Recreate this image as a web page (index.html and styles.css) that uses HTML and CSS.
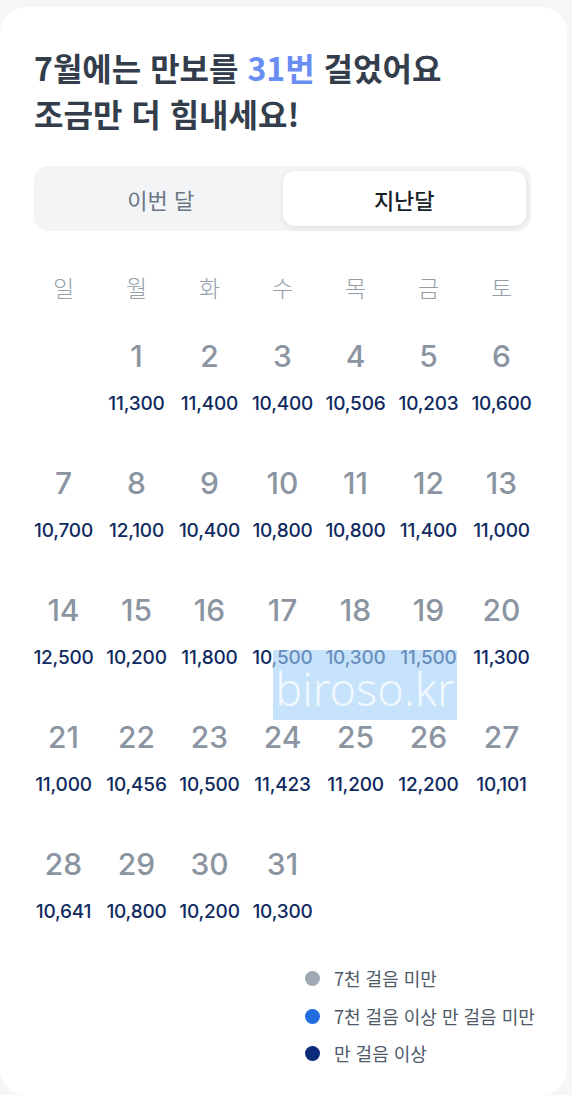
FILE: index.html
```html
<!DOCTYPE html>
<html lang="ko">
<head>
    <meta charset="UTF-8">
    <meta name="viewport" content="width=device-width, initial-scale=1.0">
    <title>만보 달력</title>
    <link rel="stylesheet" href="styles.css">
</head>
<body>

    <div class="card">
        <h1 class="title">7월에는 만보를 <span class="accent">31번</span> 걸었어요<br>조금만 더 힘내세요!</h1>

        <div class="tabs">
            <button class="tab">이번 달</button>
            <button class="tab active">지난달</button>
        </div>

        <div class="week">
            <span>일</span><span>월</span><span>화</span><span>수</span><span>목</span><span>금</span><span>토</span>
        </div>

        <div class="calendar">
            <div class="day"></div>
            <div class="day"><span class="num">1</span><span class="steps">11,300</span></div>
            <div class="day"><span class="num">2</span><span class="steps">11,400</span></div>
            <div class="day"><span class="num">3</span><span class="steps">10,400</span></div>
            <div class="day"><span class="num">4</span><span class="steps">10,506</span></div>
            <div class="day"><span class="num">5</span><span class="steps">10,203</span></div>
            <div class="day"><span class="num">6</span><span class="steps">10,600</span></div>

            <div class="day"><span class="num">7</span><span class="steps">10,700</span></div>
            <div class="day"><span class="num">8</span><span class="steps">12,100</span></div>
            <div class="day"><span class="num">9</span><span class="steps">10,400</span></div>
            <div class="day"><span class="num">10</span><span class="steps">10,800</span></div>
            <div class="day"><span class="num">11</span><span class="steps">10,800</span></div>
            <div class="day"><span class="num">12</span><span class="steps">11,400</span></div>
            <div class="day"><span class="num">13</span><span class="steps">11,000</span></div>

            <div class="day"><span class="num">14</span><span class="steps">12,500</span></div>
            <div class="day"><span class="num">15</span><span class="steps">10,200</span></div>
            <div class="day"><span class="num">16</span><span class="steps">11,800</span></div>
            <div class="day"><span class="num">17</span><span class="steps">10,500</span></div>
            <div class="day"><span class="num">18</span><span class="steps">10,300</span></div>
            <div class="day"><span class="num">19</span><span class="steps">11,500</span></div>
            <div class="day"><span class="num">20</span><span class="steps">11,300</span></div>

            <div class="day"><span class="num">21</span><span class="steps">11,000</span></div>
            <div class="day"><span class="num">22</span><span class="steps">10,456</span></div>
            <div class="day"><span class="num">23</span><span class="steps">10,500</span></div>
            <div class="day"><span class="num">24</span><span class="steps">11,423</span></div>
            <div class="day"><span class="num">25</span><span class="steps">11,200</span></div>
            <div class="day"><span class="num">26</span><span class="steps">12,200</span></div>
            <div class="day"><span class="num">27</span><span class="steps">10,101</span></div>

            <div class="day"><span class="num">28</span><span class="steps">10,641</span></div>
            <div class="day"><span class="num">29</span><span class="steps">10,800</span></div>
            <div class="day"><span class="num">30</span><span class="steps">10,200</span></div>
            <div class="day"><span class="num">31</span><span class="steps">10,300</span></div>
        </div>

        <ul class="legend">
            <li><span class="dot gray"></span>7천 걸음 미만</li>
            <li><span class="dot blue"></span>7천 걸음 이상 만 걸음 미만</li>
            <li><span class="dot navy"></span>만 걸음 이상</li>
        </ul>

        <div class="watermark">biroso.kr</div>
    </div>

</body>
</html>
```

FILE: styles.css
```css
body {
    margin: 0;
    background: #f5f6f8;
    font-family: Inter, "Noto Sans CJK KR", sans-serif;
}
.card {
    position: relative;
    background: white;
    margin: 7px 5px 0 0;
    padding: 37px 36px 22px 34px;
    border-radius: 26px;
}
.title {
    margin: 0;
    font-size: 32px;
    line-height: 46px;
    font-weight: bold;
    color: #333d4b;
    font-family: "Noto Sans CJK KR", sans-serif;
}
.title .accent {
    color: #6a8df3;
}
.tabs {
    display: flex;
    margin-top: 30px;
    padding: 5px;
    background: #f2f4f6;
    border-radius: 14px;
}
.tab {
    flex: 1;
    height: 55px;
    border: none;
    background: none;
    border-radius: 12px;
    font-family: "Noto Sans CJK KR", sans-serif;
    font-size: 22px;
    color: #6b7684;
}
.tab.active {
    background: white;
    color: #191f28;
    font-weight: 500;
    box-shadow: 0 2px 6px rgba(0, 0, 0, 0.08);
}
.week {
    display: grid;
    grid-template-columns: repeat(7, 1fr);
    margin: 41px -7px 0;
    text-align: center;
    font-family: "Noto Sans CJK KR", sans-serif;
    font-size: 23px;
    font-weight: 300;
    line-height: 30px;
    color: #959ea9;
}
.calendar {
    display: grid;
    grid-template-columns: repeat(7, 1fr);
    row-gap: 49px;
    margin: 36px -7px 0;
    text-align: center;
}
.day {
    display: flex;
    flex-direction: column;
    align-items: center;
}
.num {
    font-size: 30px;
    line-height: 36px;
    font-weight: 500;
    color: #8b95a1;
}
.steps {
    margin-top: 18px;
    font-size: 19px;
    line-height: 24px;
    font-weight: 500;
    color: #0f2a60;
    letter-spacing: -0.2px;
}
.legend {
    list-style: none;
    margin: 36px -6px 0 271px;
    padding: 0;
    display: flex;
    flex-direction: column;
    align-items: flex-start;
}
.legend li {
    display: flex;
    align-items: center;
    gap: 14px;
    font-family: "Noto Sans CJK KR", sans-serif;
    font-size: 18px;
    line-height: 37.5px;
    color: #4e5968;
}
.dot {
    width: 15px;
    height: 15px;
    border-radius: 50%;
}
.dot.gray {
    background: #a0a8b3;
}
.dot.blue {
    background: #1f6de0;
}
.dot.navy {
    background: #0b2b7a;
}
.watermark {
    position: absolute;
    left: 273px;
    top: 643px;
    width: 184px;
    height: 70px;
    background: rgba(162, 208, 250, 0.6);
    color: rgba(255, 255, 255, 0.75);
    font-family: "Noto Sans", sans-serif;
    font-weight: 300;
    font-size: 45px;
    line-height: 78px;
    text-align: center;
    overflow: hidden;
}
```
